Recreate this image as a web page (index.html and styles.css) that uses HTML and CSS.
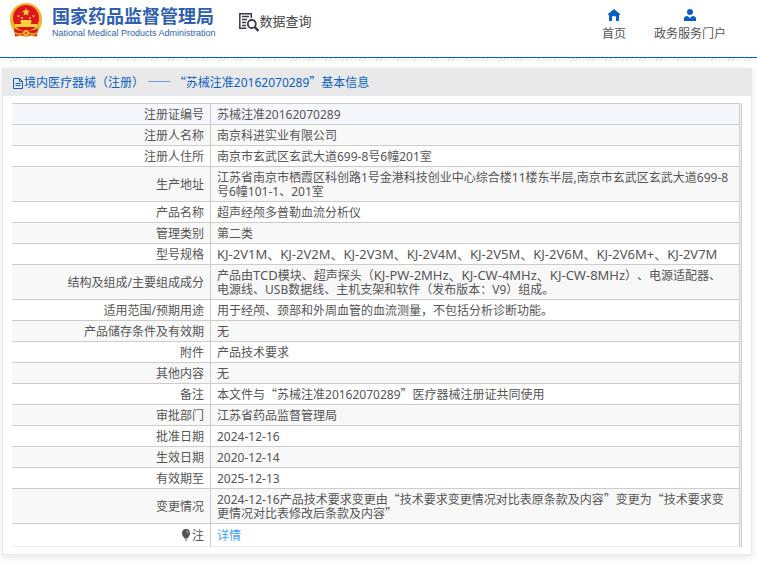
FILE: index.html
```html
<!DOCTYPE html>
<html lang="zh-CN">
<head>
<meta charset="utf-8">
<meta name="viewport" content="width=device-width, initial-scale=1">
<title>国家药品监督管理局 数据查询</title>
<link rel="stylesheet" href="styles.css">
</head>
<body>
<header class="site-header">
  <a class="brand" href="#">
    <svg class="emblem" viewBox="0 0 34 36" aria-hidden="true">
      <path fill="#efb42a" d="M17 1C8 1 1 8 1 17c0 6 2 10 5 13v5l6-1 5 1 5-1 6 1v-5c3-3 5-7 5-13C33 8 26 1 17 1z"/>
      <circle cx="17" cy="16" r="13" fill="#e0141c"/>
      <path fill="#f8cf3c" d="M17 6l1.200 2.600 2.800.3-2.100 1.900.6 2.800L17 12.200l-2.500 1.400.6-2.800L13 8.900l2.800-.3z"/>
      <g fill="#f8cf3c"><circle cx="9.500" cy="14" r="1.100"/><circle cx="13" cy="16" r="1.100"/><circle cx="21" cy="16" r="1.100"/><circle cx="24.500" cy="14" r="1.100"/></g>
      <path fill="#f8cf3c" d="M12 18h10l1 2h-1v2h6v3H6v-3h6v-2h-1z"/>
      <path fill="#d9181c" d="M5 26q4 3 12 3t12-3l-1 8-6-1-5 1-5-1-6 1z"/>
      <path fill="none" stroke="#f0bd2c" stroke-width="1.500" d="M6 31q5 2 8 0m6 0q4 2 8 0"/>
      <circle cx="17" cy="31" r="3" fill="#f0bd2c"/><circle cx="17" cy="31" r="1" fill="#d9181c"/>
    </svg>
    <span class="brand-names">
      <span class="brand-cn">国家药品监督管理局</span>
      <span class="brand-en">National Medical Products Administration</span>
    </span>
  </a>
  <a class="section" href="#">
    <svg class="section-icon" viewBox="0 0 20 20" fill="none" stroke="#3c3a4c" aria-hidden="true">
      <path stroke-width="1.500" d="M7.500 16.300H.8V1.800H12.300V6"/>
      <path stroke-width="1.300" d="M3 4.500h7M3 7.500h5M3 10.500h4M3 13.500h4"/>
      <circle cx="12.800" cy="12" r="4" stroke-width="1.800"/>
      <path stroke-width="2.500" d="M15.800 15l3.600 4"/>
    </svg>
    <span>数据查询</span>
  </a>
  <nav class="nav">
    <a href="#">
      <svg viewBox="0 0 12 12" aria-hidden="true"><path fill="#0b5fc4" d="M6 0L0 5v1h1v6h3V8q0-1 2-1t2 1v4h3V6h1V5z"/></svg>
      <span>首页</span>
    </a>
    <a href="#">
      <svg viewBox="0 0 12 12" aria-hidden="true"><g fill="#0b5fc4"><circle cx="6" cy="3" r="3"/><path d="M0 12V9.500Q0 7 3.500 7L6 9l2.500-2Q12 7 12 9.500V12z"/></g></svg>
      <span>政务服务门户</span>
    </a>
  </nav>
</header>
<main class="panel">
  <h1 class="panel-title">
    <svg viewBox="0 0 12 12" fill="none" stroke="#0b5fc4" aria-hidden="true"><path d="M1.500 1.500h6l3 3v7h-9zM7.500 1.500v3h3M3.500 6.500h5M3.500 8.500h5"/></svg>
    <span>境内医疗器械（注册） <span class="cjk">—— “</span>苏械注准20162070289<span class="cjk">”</span>基本信息</span>
  </h1>
  <div class="table-frame">
    <table class="details">
      <tbody>
        <tr class="active"><th scope="row">注册证编号</th><td>苏械注准20162070289</td></tr>
        <tr><th scope="row">注册人名称</th><td>南京科进实业有限公司</td></tr>
        <tr><th scope="row">注册人住所</th><td>南京市玄武区玄武大道699-8号6幢201室</td></tr>
        <tr><th scope="row">生产地址</th><td>江苏省南京市栖霞区科创路1号金港科技创业中心综合楼11楼东半层,南京市玄武区玄武大道699-8号6幢101-1、201室</td></tr>
        <tr><th scope="row">产品名称</th><td>超声经颅多普勒血流分析仪</td></tr>
        <tr><th scope="row">管理类别</th><td>第二类</td></tr>
        <tr><th scope="row">型号规格</th><td><span class="model">KJ-2V1M、KJ-2V2M、KJ-2V3M、KJ-2V4M、KJ-2V5M、KJ-2V6M、KJ-2V6M+、KJ-2V7M</span></td></tr>
        <tr><th scope="row">结构及组成/主要组成成分</th><td>产品由<span class="model">TCD</span>模块、超声探头（<span class="model">KJ-PW-2MHz、KJ-CW-4MHz、KJ-CW-8MHz</span>）、电源适配器、<span class="term">电源线</span>、USB数据线、主机支架和软件（发布版本：V9）组成。</td></tr>
        <tr><th scope="row">适用范围/预期用途</th><td>用于经颅、颈部和外周血管的血流测量，不包括分析诊断功能。</td></tr>
        <tr><th scope="row">产品储存条件及有效期</th><td>无</td></tr>
        <tr><th scope="row">附件</th><td>产品技术要求</td></tr>
        <tr><th scope="row">其他内容</th><td>无</td></tr>
        <tr><th scope="row">备注</th><td>本文件与<span class="cjk">“</span>苏械注准20162070289<span class="cjk">”</span>医疗器械注册证共同使用</td></tr>
        <tr><th scope="row">审批部门</th><td>江苏省药品监督管理局</td></tr>
        <tr><th scope="row">批准日期</th><td>2024-12-16</td></tr>
        <tr><th scope="row">生效日期</th><td>2020-12-14</td></tr>
        <tr><th scope="row">有效期至</th><td>2025-12-13</td></tr>
        <tr><th scope="row">变更情况</th><td>2024-12-16产品技术要求变更由<span class="cjk">“</span>技术要求变更情况对比表原条款及内容<span class="cjk">”</span>变更为<span class="cjk">“</span>技术要求变更情况对比表修改后条款及内容<span class="cjk">”</span></td></tr>
        <tr class="note"><th scope="row"><svg class="bulb" viewBox="0 0 10 12" aria-hidden="true"><path fill="#555" d="M5 0C2 0 1 2 1 4.500 1 7 3 8 3.500 9.500h3C7 8 9 7 9 4.500 9 2 8 0 5 0zM4 10.500h2v1H4z"/><path fill="none" stroke="#ddd" d="M5.500 2Q7 2.500 7 4"/></svg>注</th><td><a href="#">详情</a></td></tr>
      </tbody>
    </table>
  </div>
</main>
</body>
</html>
```
FILE: styles.css
```css
* {
  box-sizing: border-box;
}

body {
  margin: 0;
  background: #fff;
  color: #555;
  font: 12px/14px "Noto Sans", "Noto Sans CJK SC", sans-serif;
  text-spacing-trim: space-all;
}

a {
  color: inherit;
  text-decoration: none;
}

.cjk {
  font-family: "Noto Sans CJK SC", sans-serif;
  line-height: 0;
}

.model {
  font-size: 13px;
  line-height: 0;
}

.term {
  white-space: nowrap;
}

.site-header {
  display: flex;
  align-items: flex-start;
  height: 61px;
  padding: 0 31px 0 9px;
  background: repeating-linear-gradient(135deg, #e4e4e4 0 1px, #fff 1px 3px) bottom / 100% 3px no-repeat;
}

.site-header::after {
  content: "";
  position: absolute;
  top: 57px;
  right: 0;
  left: 0;
  height: 1px;
  background: #0b5fc4;
}

.brand {
  display: flex;
  gap: 9px;
  padding-top: 2px;
  color: #2f5fb0;
}

.emblem {
  width: 34px;
  height: 36px;
}

.brand-names {
  display: flex;
  flex-direction: column;
  padding-top: 3px;
  white-space: nowrap;
}

.brand-cn {
  font-size: 18px;
  font-weight: 700;
  line-height: 22px;
}

.brand-en {
  font: 9px/12px "Liberation Sans", sans-serif;
}

.section {
  display: flex;
  gap: 1px;
  margin-left: 23px;
  padding-top: 12px;
  color: #444;
  font-size: 13px;
  line-height: 18px;
}

.section-icon {
  width: 20px;
  height: 20px;
}

.nav {
  display: flex;
  gap: 28px;
  margin-left: auto;
  padding-top: 9px;
}

.nav a {
  display: flex;
  flex-direction: column;
  align-items: center;
  gap: 6px;
}

.nav svg {
  width: 12px;
  height: 12px;
}

.panel {
  margin: 7px 5px 12px 2px;
  padding-bottom: 7px;
  border: 1px solid #e9e9ef;
  border-top: 0;
  box-shadow: 0 2px 8px rgba(0, 0, 0, 0.1);
}

.panel-title {
  display: flex;
  align-items: center;
  margin: 0;
  height: 28px;
  padding: 2px 0 0 9px;
  border-bottom: 1px solid #e6e8f2;
  background: #e9e9e9;
  color: #0b5fc4;
  font-size: 12px;
  font-weight: 400;
}

.panel-title svg {
  width: 12px;
  height: 12px;
}

.table-frame {
  margin: 7px 9px 0;
  padding-right: 1px;
  border-right: 1px solid #ccc;
  background: #f0f1fa;
}

.details {
  width: 100%;
  border-spacing: 0;
  border-top: 1px solid #ccc;
  border-right: 1px solid #ccc;
  background: #fff;
}

.details th,
.details td {
  padding: 4px 6px 2px;
  border-bottom: 1px solid #ccc;
}

.details th {
  width: 199px;
  border-right: 1px solid #ccc;
  font-weight: 400;
  text-align: right;
}

.details tr:nth-child(even) {
  background: #f8f8f8;
}

.details .active {
  background: #f5f7fc;
}

.details .note th,
.details .note td {
  padding: 5px 6px 3px;
  border-bottom-color: #ebebf7;
}

.note a {
  color: #409eff;
}

.bulb {
  width: 10px;
  height: 12px;
  margin-right: 1px;
  vertical-align: -1px;
}
```
